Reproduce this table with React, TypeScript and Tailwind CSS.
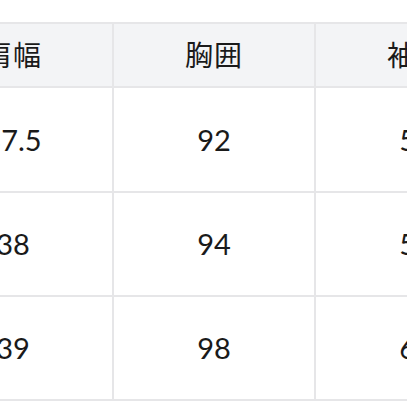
import React from 'react';

const headers = ['肩幅', '胸囲', '袖丈'];
const rows = [
  ['37.5', '92', '58'],
  ['38', '94', '59'],
  ['39', '98', '60'],
];

const App = () => {
  return (
    <div className="w-[407px] h-[407px] overflow-hidden bg-white">
      <div className="mt-[22px] ml-[-88px] w-max grid grid-cols-[198px_200px_200px] gap-[2px] bg-[#e6e6e8] p-[2px] font-['Lato','Noto_Sans_CJK_JP',sans-serif] text-[#1a1a1a]">
        {headers.map((h) => (
          <div key={h} className="h-[62px] bg-[#f3f4f6] flex items-center justify-center text-[28px] tracking-[1px]">
            {h}
          </div>
        ))}
        {rows.map((r, i) =>
          r.map((v, j) => (
            <div key={`${i}-${j}`} className={`${i === 0 ? 'h-[103px]' : 'h-[102px]'} bg-white flex items-center justify-center text-[29px]`}>
              {v}
            </div>
          ))
        )}
      </div>
    </div>
  );
};

export default App;
